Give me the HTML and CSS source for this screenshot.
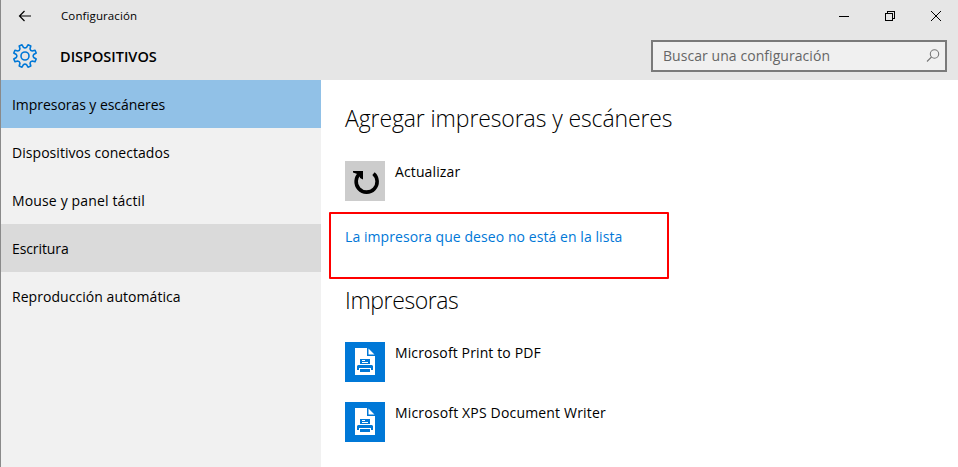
FILE: index.html
```html
<!DOCTYPE html>
<html lang="es">
<head>
<meta charset="utf-8">
<title>Configuración</title>
<link rel="stylesheet" href="styles.css">
</head>
<body>
<div class="window">
  <header class="header">
    <div class="titlebar">
      <svg class="back" width="14" height="12" viewBox="0 0 14 12"><path d="M13 6H1.500M6.500 1l-5 5 5 5"/></svg>
      <span class="app-name">Configuración</span>
      <div class="controls">
        <svg width="46" height="32" viewBox="0 0 46 32" shape-rendering="crispEdges"><path d="M18 16.500h10"/></svg>
        <svg width="46" height="32" viewBox="0 0 46 32" shape-rendering="crispEdges"><path d="M18.500 13.500h7v7h-7zM20.500 13.500v-2h7v7h-2"/></svg>
        <svg width="46" height="32" viewBox="0 0 46 32"><path d="M18 11l10 10M28 11l-10 10"/></svg>
      </div>
    </div>
    <div class="heading">
      <svg class="gear" width="26" height="26" viewBox="-13 -13 26 26">
        <path d="M8.670 1.530L11.200 3L10.050 5.800L7.200 5.050Q5.300 5.300 5.050 7.200L5.800 10.050L3 11.200L1.530 8.670Q0 7.500-1.530 8.670L-3 11.200L-5.800 10.050L-5.050 7.200Q-5.300 5.300-7.200 5.050L-10.050 5.800L-11.200 3L-8.670 1.530Q-7.500 0-8.670-1.530L-11.200-3L-10.050-5.800L-7.200-5.050Q-5.300-5.300-5.050-7.200L-5.800-10.050L-3-11.200L-1.530-8.670Q0-7.500 1.530-8.670L3-11.200L5.800-10.050L5.050-7.200Q5.300-5.300 7.200-5.050L10.050-5.800L11.200-3L8.670-1.530Q7.500 0 8.670 1.530Z"/>
        <circle r="4"/>
      </svg>
      <h1 class="category">DISPOSITIVOS</h1>
      <div class="search">
        <span class="placeholder">Buscar una configuración</span>
        <svg class="lens" width="14" height="14" viewBox="0 0 14 14"><circle cx="8.500" cy="5" r="4.200"/><path d="M5.500 8L1 12.500"/></svg>
      </div>
    </div>
  </header>
  <div class="body">
    <nav class="sidebar">
      <a class="item selected">Impresoras y escáneres</a>
      <a class="item">Dispositivos conectados</a>
      <a class="item wide">Mouse y panel táctil</a>
      <a class="item hover">Escritura</a>
      <a class="item">Reproducción automática</a>
    </nav>
    <main class="content">
      <h2 class="section add">Agregar impresoras y escáneres</h2>
      <div class="row refresh">
        <svg class="tile gray" width="40" height="40" viewBox="0 0 40 40"><path class="arc" d="M28.500 12.700A10.500 10.500 0 1 1 15 12.500"/><path class="tip" d="M8 10h10v8.500l-3-1.500v-3L8 11.500z"/></svg>
        <span class="label">Actualizar</span>
      </div>
      <div class="callout"><a class="link">La impresora que deseo no está en la lista</a></div>
      <h2 class="section printers">Impresoras</h2>
      <div class="row">
        <svg class="tile" width="40" height="40" viewBox="0 0 40 40"><path fill="#fff" d="M10 6h12v8h8v19H10zM23.500 6.500l6 6h-6z"/><path fill="#0078d7" fill-rule="evenodd" d="M15 17h10v5H15zM17 18h3v1h-3zM17 20h6v1h-6zM13 23h14l1 1v4h-2v-2H14v2h-2v-4zM15 27h10v3H15z"/></svg>
        <span class="label">Microsoft Print to PDF</span>
      </div>
      <div class="row">
        <svg class="tile" width="40" height="40" viewBox="0 0 40 40"><path fill="#fff" d="M10 6h12v8h8v19H10zM23.500 6.500l6 6h-6z"/><path fill="#0078d7" fill-rule="evenodd" d="M15 17h10v5H15zM17 18h3v1h-3zM17 20h6v1h-6zM13 23h14l1 1v4h-2v-2H14v2h-2v-4zM15 27h10v3H15z"/></svg>
        <span class="label long">Microsoft XPS Document Writer</span>
      </div>
    </main>
  </div>
</div>
</body>
</html>
```

FILE: styles.css
```css
* { box-sizing: border-box; }
body { margin: 0; font-family: "Open Sans", "Noto Sans", sans-serif; font-size: 14px; line-height: 20px; color: #000; overflow: hidden; }
.window { height: 467px; border-left: 1px solid #8a8a8a; display: flex; flex-direction: column; background: #fff; }
.header { height: 80px; background: #e6e6e6; }
.titlebar { height: 32px; display: flex; align-items: center; padding-left: 17px; }
.titlebar svg { fill: none; stroke: #000; stroke-width: 1; display: block; }
.titlebar .back { stroke-width: 1.2; }
.app-name { margin-left: 29px; font-size: 11.5px; letter-spacing: 0.11px; }
.controls { margin-left: auto; margin-right: -1px; display: flex; }
.heading { height: 48px; display: flex; align-items: center; padding: 0 11px; }
.gear { fill: none; stroke: #0078d7; stroke-width: 1.6; stroke-linejoin: round; }
.category { margin: 1px 0 0 22px; font-size: 14.5px; line-height: 20px; font-weight: 600; }
.search { margin-left: auto; width: 296px; height: 32px; border: 2px solid #7a7a7a; background: #f0f0f0; display: flex; align-items: center; justify-content: space-between; padding: 0 5px 0 10px; color: #666; }
.placeholder { letter-spacing: 0.06px; }
.lens { fill: none; stroke: #777; stroke-width: 1.1; }
.body { display: flex; flex: 1; }
.sidebar { width: 320px; background: #f1f1f1; }
.item { height: 48px; display: flex; align-items: center; padding: 2px 0 0 11px; letter-spacing: 0.05px; }
.item.wide { letter-spacing: 0.15px; }
.item.selected { background: #91c1e7; letter-spacing: -0.05px; }
.item.hover { background: #dadada; letter-spacing: -0.1px; }
.content { flex: 1; padding: 21px 0 0 24px; }
.section { margin: 0; font-size: 23px; line-height: 34px; font-weight: 300; letter-spacing: -0.11px; white-space: nowrap; }
.row { display: flex; height: 40px; margin-bottom: 20px; }
.tile { background: #0078d7; flex: none; }
.tile.gray { background: #ccc; }
.refresh { margin: 26px 0 11px; }
.arc { fill: none; stroke: #000; stroke-width: 3.6; }
.tip { fill: #000; }
.label { margin-left: 10px; padding-top: 1px; letter-spacing: 0.12px; }
.label.long { letter-spacing: 0.17px; }
.callout { width: 340px; height: 67px; margin-left: -16px; border: 2px solid #f00; border-radius: 1px; padding: 13px 14px; }
.link { color: #0078d7; letter-spacing: 0.07px; white-space: nowrap; }
.printers { margin: 4px 0 25px; letter-spacing: -0.4px; }
```
